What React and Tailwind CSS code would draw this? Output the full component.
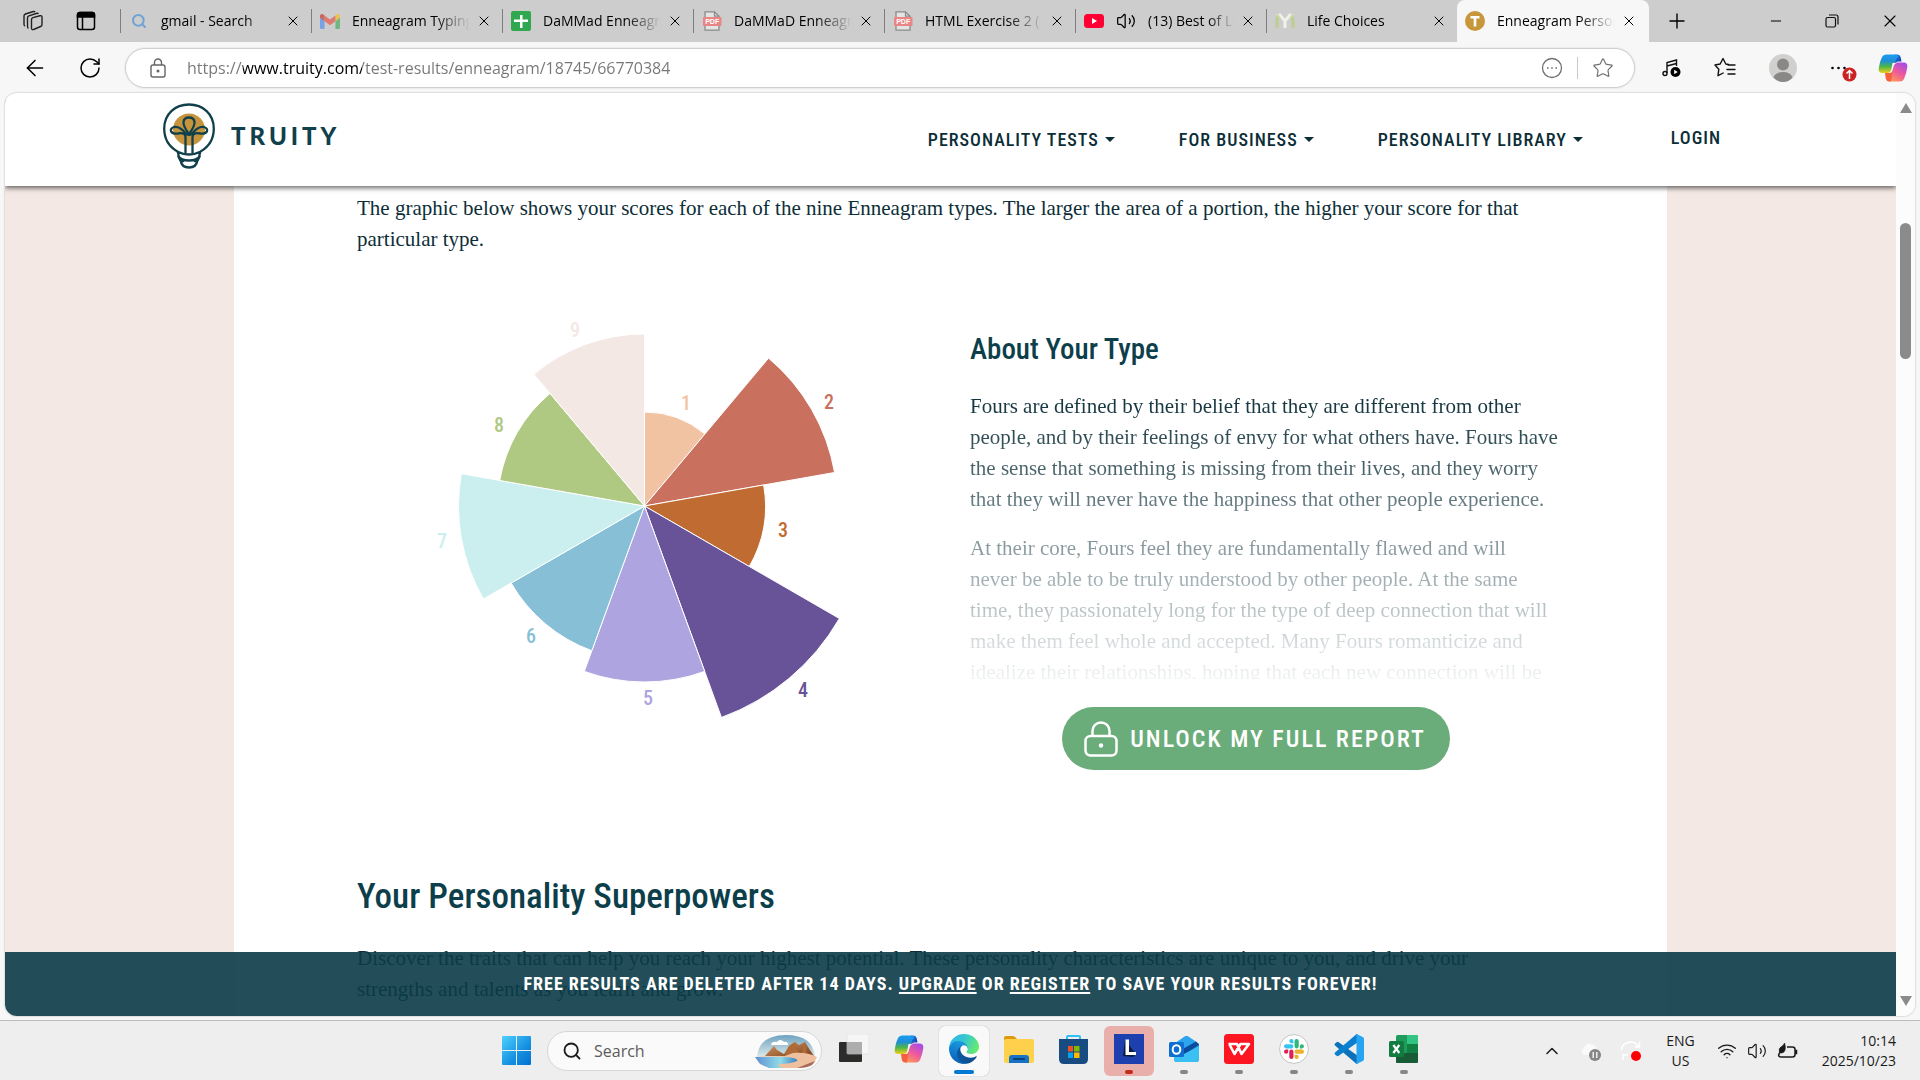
import React from "react";
import {
  ArrowLeft,
  RotateCw,
  Plus,
  Minus,
  X,
  Search,
  Star,
  Wifi,
  Volume2,
  ChevronUp,
} from "lucide-react";

const condensed =
  "font-['Liberation_Sans_Narrow','Roboto_Condensed','Liberation_Sans',sans-serif]";
const serif = "font-['Liberation_Serif',serif]";
const ui = "font-['Open_Sans','Noto_Sans',sans-serif]";

/* ---------- favicons ---------- */

function SearchFav() {
  return <Search className="size-4 text-[#6fa3d4]" strokeWidth={3} />;
}

function GmailFav() {
  return (
    <svg viewBox="0 0 24 18" className="w-5 opacity-60" aria-hidden="true">
      <path d="M0 3v13.4A1.6 1.6 0 0 0 1.6 18H5.5V8.500L0 4z" fill="#4285f4" />
      <path d="M24 3v13.400A1.600 1.600 0 0 1 22.400 18H18.500V8.500L24 4z" fill="#34a853" />
      <path d="M18.500 1.800V8.600L24 4.400V2.400C24 .3 21.700-.8 20 .5z" fill="#fbbc04" />
      <path d="M5.500 8.600V1.800L12 6.700l6.500-4.900v6.800L12 13.500z" fill="#ea4335" />
      <path d="M0 2.400v2l5.500 4.200V1.800L4 .5C2.300-.8 0 .3 0 2.400z" fill="#c5221f" />
    </svg>
  );
}

function SheetFav() {
  return (
    <svg viewBox="0 0 20 20" className="size-5" aria-hidden="true">
      <rect width="20" height="20" rx="2" fill="#2fa84f" />
      <path d="M9 4h2.500v4.500H17V11h-5.500v6H9v-6H3V8.500h6z" fill="#fff" />
    </svg>
  );
}

function PdfFav() {
  return (
    <svg viewBox="0 0 20 20" className="size-5" aria-hidden="true">
      <path d="M3 .8h9.500L17 5.200V19.200H3z" fill="#e4e4e4" stroke="#8a8a8a" strokeWidth="1.300" />
      <path d="M12.500.8v4.400H17" fill="none" stroke="#8a8a8a" strokeWidth="1.300" />
      <rect x="1" y="6" width="18.500" height="9" rx="1" fill="#e98585" />
      <text x="10.200" y="13" textAnchor="middle" fontSize="7" fontWeight="700" fontFamily="Liberation Sans" fill="#fff">
        PDF
      </text>
    </svg>
  );
}

function YoutubeFav() {
  return (
    <svg viewBox="0 0 20 20" className="size-5" aria-hidden="true">
      <rect y="3" width="20" height="14" rx="3.500" fill="#ff0033" />
      <path d="M8 7v6l5-3z" fill="#fff" />
    </svg>
  );
}

function LifeFav() {
  return (
    <svg viewBox="0 0 20 20" className="size-5" aria-hidden="true">
      <path d="M2 17V9q0-3 3-3M18 17V9q0-3-3-3" fill="none" stroke="#bccf8e" strokeWidth="3" />
      <path d="M4 3l6 7 6-7M10 10v7" fill="none" stroke="#f1f1ea" strokeWidth="3" />
      <path d="M2 3l3 4M18 3l-3 4" fill="none" stroke="#d3dcae" strokeWidth="2" />
    </svg>
  );
}

function TruityFav() {
  return (
    <svg viewBox="0 0 20 20" className="size-5" aria-hidden="true">
      <circle cx="10" cy="10" r="10" fill="#c9973b" />
      <path d="M5.500 5h9v2.500h-3.200V15.500H8.700V7.500H5.500z" fill="#fff" />
    </svg>
  );
}

/* ---------- browser chrome ---------- */

const tabs = [
  { title: "gmail - Search", icon: SearchFav },
  { title: "Enneagram Typing", icon: GmailFav },
  { title: "DaMMad Enneagram", icon: SheetFav },
  { title: "DaMMaD Enneagram", icon: PdfFav },
  { title: "HTML Exercise 2 (1)", icon: PdfFav },
  { title: "(13) Best of Lo", icon: YoutubeFav, sound: true },
  { title: "Life Choices", icon: LifeFav },
  { title: "Enneagram Person", icon: TruityFav, active: true },
];

function Tab({ title, icon: Icon, sound, active }) {
  return (
    <div
      className={
        active
          ? "flex h-full w-48 items-center rounded-t-lg bg-[#f7f7f7] pr-3 pl-2"
          : "flex h-full w-[191px] items-center pr-[10px]"
      }
    >
      {!active && <span className="mr-2 h-6 w-px shrink-0 bg-[#7d7d7d]" />}
      <button className="flex min-w-0 flex-1 items-center text-left">
        <span className="flex w-5 shrink-0 justify-center">
          <Icon />
        </span>
        {sound && <Volume2 className="ml-3 size-5 shrink-0" strokeWidth={1.5} />}
        <span className="ml-3 flex-1 overflow-hidden text-sm whitespace-nowrap text-black [mask-image:linear-gradient(90deg,#000_70%,transparent)]">
          {title}
        </span>
      </button>
      <button aria-label={"Close " + title} className="ml-1.5 shrink-0">
        <X className="size-4" strokeWidth={1.5} />
      </button>
    </div>
  );
}

function WorkspacesIcon() {
  return (
    <svg viewBox="0 0 22 22" className="size-[22px]" fill="none" stroke="#222" strokeWidth="1.400" aria-hidden="true">
      <path d="M9.500 9.500q0-1.500 1.400-1.900l7-1.900q2-.4 2.100 1.400v7.400q0 1.500-1.400 2l-7 3q-2 .6-2.100-1.200z" />
      <path d="M6.500 18.300q-1-.4-1-1.800V7.800q0-1.500 1.400-2l8-2.500q1-.2 1.600.5" />
      <path d="M3 16q-1-.5-1-1.800V6q0-1.500 1.400-2l8-2.500q1.100-.2 1.700.5" />
    </svg>
  );
}

function TabActionsIcon() {
  return (
    <svg viewBox="0 0 20 20" className="size-5" fill="none" stroke="#000" strokeWidth="1.500" aria-hidden="true">
      <rect x="1.500" y="1.500" width="17" height="17" rx="2.500" />
      <path d="M1.500 4a2.500 2.500 0 0 1 2.500-2.500h12A2.500 2.500 0 0 1 18.500 4v2h-17z" fill="#000" />
      <path d="M6.500 6v12" />
    </svg>
  );
}

function TabStrip() {
  return (
    <header className="flex h-[42px] shrink-0 items-center bg-[#cdcdcd]">
      <div className="flex w-[120px] items-center gap-8 pl-[22px]">
        <button aria-label="Workspaces"><WorkspacesIcon /></button>
        <button aria-label="Tab actions"><TabActionsIcon /></button>
      </div>
      {tabs.map((t) => (
        <Tab key={t.title} {...t} />
      ))}
      <button aria-label="New tab" className="ml-4"><Plus className="size-6" strokeWidth={1.400} /></button>
      <div className="ml-auto flex items-center gap-[41px] pr-5">
        <button aria-label="Minimize"><Minus className="size-4" strokeWidth={1.500} /></button>
        <button aria-label="Restore">
          <svg viewBox="0 0 14 14" className="size-3.5" fill="none" stroke="#111" strokeWidth="1.200" aria-hidden="true">
            <rect x="1" y="3.500" width="9.500" height="9.500" rx="1.500" />
            <path d="M4 1h7q2 0 2 2v7.500" />
          </svg>
        </button>
        <button aria-label="Close"><X className="size-5" strokeWidth={1.300} /></button>
      </div>
    </header>
  );
}

function LockIcon() {
  return (
    <svg viewBox="0 0 18 20" className="h-5 w-[18px]" fill="none" stroke="#666" strokeWidth="1.400" aria-hidden="true">
      <rect x="2" y="7" width="14" height="12" rx="2" />
      <path d="M5.500 7V4.500a3.500 3.500 0 0 1 7 0V7" />
      <circle cx="9" cy="13" r=".8" fill="#666" />
    </svg>
  );
}

function CopilotIcon({ size }) {
  return (
    <svg viewBox="0 0 30 28" className={size} aria-hidden="true">
      <defs>
        <linearGradient id="cpA" x1="0" y1="0" x2="0" y2="1">
          <stop offset="0" stopColor="#1b9cf2" />
          <stop offset=".35" stopColor="#1f8fd6" />
          <stop offset=".65" stopColor="#4cb648" />
          <stop offset="1" stopColor="#f0cf1c" />
        </linearGradient>
        <linearGradient id="cpB" x1=".8" y1="0" x2=".2" y2="1">
          <stop offset="0" stopColor="#a64be8" />
          <stop offset=".5" stopColor="#ee5a9c" />
          <stop offset="1" stopColor="#ff9a52" />
        </linearGradient>
        <linearGradient id="cpC" x1="0" y1="0" x2="1" y2="1">
          <stop offset="0" stopColor="#1587e0" />
          <stop offset="1" stopColor="#1a2fae" />
        </linearGradient>
      </defs>
      <path d="M17 .5h2.500q2.500 0 3.200 2.700L23.500 7.500H20q-2.500 0-3.300 2.500z" fill="url(#cpC)" />
      <path d="M8 .5h9.500q2.500 0 3 2.500-1.800.5-2.600 3L15 16q-.8 3-3.800 3H4.500Q.2 19 .7 14.500 1.500 8 4 3 5.300.5 8 .5z" fill="url(#cpA)" />
      <path d="M22 27.500h-9.500q-2.500 0-3-2.500 1.800-.5 2.600-3L15 12q.8-3.500 4-3.500h6.500q4.300 0 3.800 4.500-.8 6.500-3.300 12-1.300 2.500-4 2.500z" fill="url(#cpB)" />
      <path d="M13 27.500h-2q-2.500 0-3.200-2.700L7 19h4.200q2.500 0 3.400-2z" fill="#f5603f" />
      <path d="M14.500 9h4q-2 .5-2.700 3l-1.500 5q-.6 2-2.800 2H10q2.500-.5 3.200-3z" fill="#f7f7f7" />
    </svg>
  );
}

function Toolbar() {
  return (
    <div className="flex h-[51px] shrink-0 items-center bg-[#f7f7f7]">
      <button aria-label="Back" className="ml-[22px]"><ArrowLeft className="size-[26px]" strokeWidth={1.400} /></button>
      <button aria-label="Refresh" className="ml-[30px]"><RotateCw className="size-6" strokeWidth={1.500} /></button>
      <div className="ml-[23px] flex h-10 flex-1 items-center rounded-full border border-[#cfcfcf] bg-white px-5 shadow-[0_0_0_1px_#ececec]">
        <button aria-label="Site information" className="ml-[3px]"><LockIcon /></button>
        <input
          aria-label="Address"
          defaultValue="https://www.truity.com/test-results/enneagram/18745/66770384"
          className="ml-5 flex-1 bg-[linear-gradient(90deg,#767676_0_56px,#000_56px_175px,#767676_175px)] bg-clip-text text-base text-transparent outline-none"
        />
        <button aria-label="More options" className="text-[#707070]">
          <svg viewBox="0 0 22 22" className="size-[22px]" fill="none" stroke="currentColor" strokeWidth="1.300" aria-hidden="true">
            <circle cx="11" cy="11" r="9.500" />
            <path d="M6 11h1.600M10.200 11h1.600M14.400 11H16" strokeWidth="1.700" />
          </svg>
        </button>
        <span className="mx-[14px] h-[22px] w-px bg-[#c9c9c9]" />
        <button aria-label="Add to favourites" className="text-[#707070]"><Star className="size-[22px]" strokeWidth={1.300} /></button>
      </div>
      <div className="flex items-center gap-8 pr-3 pl-[26px]">
        <button aria-label="Media">
          <svg viewBox="0 0 20 20" className="size-5" fill="none" stroke="#111" strokeWidth="1.400" aria-hidden="true">
            <path d="M6 15V4.500L15.500 2v6M6 8l9.500-2.500" />
            <circle cx="4" cy="15.500" r="2" />
            <circle cx="14.500" cy="14" r="5" fill="#000" stroke="none" />
            <path d="M13.200 11.700v4.600l3.500-2.300z" fill="#fff" stroke="none" />
          </svg>
        </button>
        <button aria-label="Favourites">
          <svg viewBox="0 0 24 22" className="h-[22px] w-6" fill="none" stroke="#111" strokeWidth="1.400" strokeLinejoin="round" strokeLinecap="round" aria-hidden="true">
            <path d="M15.500 7.500 12.800 7 10 1.500 7.200 7 2 8l3.800 4.200-.8 6.500 5.200-2.700M15 8h7M14 12.500h8M15 17h7" />
          </svg>
        </button>
        <button aria-label="Profile">
          <svg viewBox="0 0 28 28" className="size-7" aria-hidden="true">
            <circle cx="14" cy="14" r="14" fill="#d2d0ce" />
            <circle cx="14" cy="10.500" r="6" fill="#8a8886" />
            <path d="M4.500 23.500q2-5.500 9.500-5.500t9.500 5.500q-4 4.500-9.500 4.500t-9.500-4.500z" fill="#8a8886" />
          </svg>
        </button>
        <button aria-label="Settings and more, update available">
          <svg viewBox="0 0 28 28" className="size-7" aria-hidden="true">
            <circle cx="3.500" cy="14" r="1.300" />
            <circle cx="9.500" cy="14" r="1.300" />
            <circle cx="15.500" cy="14" r="1.300" />
            <circle cx="20.500" cy="20.500" r="7" fill="#cc2222" />
            <path d="M20.500 25v-8M17.500 19.500l3-3 3 3" stroke="#fff" strokeWidth="1.500" fill="none" />
          </svg>
        </button>
        <button aria-label="Copilot" className="-ml-[11px]"><CopilotIcon size="h-7 w-[30px]" /></button>
      </div>
    </div>
  );
}

/* ---------- web page ---------- */

function Bulb() {
  return (
    <svg viewBox="0 0 52 66" className="h-[66px] w-[52px]" fill="none" stroke="#0f404b" strokeWidth="2.300" aria-hidden="true">
      <circle cx="26" cy="26.500" r="16" fill="#c6943c" stroke="none" />
      <path d="M14.500 48.500Q1.200 41 1.200 25.500C1.200 11 12 1.500 26 1.500S50.800 11 50.800 25.500Q50.800 41 37.500 48.500" />
      <path d="M14 48.500q12 6 24 0M15 49q1 11 6 9M37 49q-1 11-6 9" />
      <path d="M15 53q3 4.500 11 4.500t11-4.500" />
      <path d="M17.500 57q1 7.500 8.500 7.500t8.500-7.500" />
      <path d="M22.500 50V34q0-5-8-3.500c-7 1-9-5-3.500-6.500 5-1 9 3 11.500 6 2 2.500 5 2.500 7 0 2.500-3 6.500-7 11.500-6 5.500 1.500 3.500 7.500-3.500 6.500q-8-1.500-8 3.500v16" />
      <path d="M26 31q-6-8-5.500-12 .5-4.500 5.500-4.500t5.500 4.500q.5 4-5.500 12z" />
    </svg>
  );
}

function NavItem({ children }) {
  return (
    <button className="flex items-center gap-1.5 text-lg font-medium tracking-[1px]">
      {children}
      <span className="h-0 w-0 border-x-[5px] border-t-[5px] border-x-transparent border-t-[#0c2e38]" />
    </button>
  );
}

function SiteHeader() {
  return (
    <header className="relative z-10 flex h-[93px] shrink-0 items-center bg-white pr-[175px] pl-[158px] text-[#0c2e38] shadow-[0_2px_5px_rgba(0,0,0,0.6)]">
      <a href="#home" className="mb-2 flex items-center gap-4 text-[#0f404b]">
        <Bulb />
        <span className="font-[Lato] text-2xl font-black tracking-[4px]">TRUITY</span>
      </a>
      <nav className={condensed + " ml-auto flex items-center gap-16"}>
        <NavItem>PERSONALITY TESTS</NavItem>
        <NavItem>FOR BUSINESS</NavItem>
        <NavItem>PERSONALITY LIBRARY</NavItem>
        <a href="#login" className="mb-1 ml-6 text-lg font-medium tracking-[1px]">LOGIN</a>
      </nav>
    </header>
  );
}

const slices = [
  { n: 1, r: 94, color: "#f2c3a3", lx: 266, ly: 103 },
  { n: 2, r: 193, color: "#ca705e", lx: 409, ly: 102 },
  { n: 3, r: 121, color: "#bf6b32", lx: 363, ly: 230 },
  { n: 4, r: 225, color: "#685298", lx: 383, ly: 390 },
  { n: 5, r: 176, color: "#aea4df", lx: 228, ly: 398 },
  { n: 6, r: 154, color: "#87c0d6", lx: 111, ly: 336 },
  { n: 7, r: 186, color: "#cbefee", lx: 22, ly: 241 },
  { n: 8, r: 147, color: "#afc983", lx: 79, ly: 125 },
  { n: 9, r: 172, color: "#f3e8e3", lx: 155, ly: 30 },
];

function ScoreChart() {
  const cx = 224.5;
  const cy = 206;
  const pt = (r, deg) => {
    const a = ((deg - 90) * Math.PI) / 180;
    return `${(cx + r * Math.cos(a)).toFixed(2)} ${(cy + r * Math.sin(a)).toFixed(2)}`;
  };
  return (
    <svg viewBox="0 0 440 440" className="size-[440px]" role="img" aria-label="Enneagram scores by type">
      {slices.map((s, i) => (
        <path
          key={s.n}
          d={`M${cx} ${cy}L${pt(s.r, i * 40)}A${s.r} ${s.r} 0 0 1 ${pt(s.r, i * 40 + 40)}Z`}
          fill={s.color}
          stroke="#fff"
          strokeWidth="1"
        />
      ))}
      {slices.map((s) => (
        <text
          key={s.n}
          x={s.lx}
          y={s.ly + 7}
          textAnchor="middle"
          fill={s.color}
          className={condensed + " text-xl font-medium"}
        >
          {s.n}
        </text>
      ))}
    </svg>
  );
}

function About() {
  return (
    <section>
      <h3 className={condensed + " text-[29px] leading-9 font-medium text-[#0d3f4b]"}>About Your Type</h3>
      <div className="mt-6 -mr-8 h-[288px] overflow-hidden whitespace-nowrap [mask-image:linear-gradient(#000,rgba(0,0,0,0.06))]">
        <p className="leading-[31px]">
          Fours are defined by their belief that they are different from other
          <br />people, and by their feelings of envy for what others have. Fours have
          <br />the sense that something is missing from their lives, and they worry
          <br />that they will never have the happiness that other people experience.
        </p>
        <p className="mt-[18px] leading-[31px]">
          At their core, Fours feel they are fundamentally flawed and will
          <br />never be able to be truly understood by other people. At the same
          <br />time, they passionately long for the type of deep connection that will
          <br />make them feel whole and accepted. Many Fours romanticize and
          <br />idealize their relationships, hoping that each new connection will be
        </p>
      </div>
      <div className="mt-7 flex justify-center">
        <button className={condensed + " flex h-[63px] items-center gap-3 rounded-full bg-[#6aac7a] pr-6 pl-[22px] text-2xl font-medium tracking-[2px] text-white"}>
          <svg viewBox="0 0 34 36" className="h-9 w-[34px]" fill="none" stroke="#fff" strokeWidth="2.500" aria-hidden="true">
            <rect x="1.500" y="15" width="31" height="19.500" rx="5" />
            <path d="M8.500 15V10a8.500 8.500 0 0 1 17 0v5" />
            <circle cx="17" cy="24.500" r="2.200" fill="#fff" stroke="none" />
          </svg>
          UNLOCK MY FULL REPORT
        </button>
      </div>
    </section>
  );
}

function ScrollBar() {
  return (
    <div className="flex w-[19px] shrink-0 flex-col items-center justify-between bg-[#fcfcfc] py-[10px]" aria-hidden="true">
      <span className="h-0 w-0 border-x-[6px] border-b-[10px] border-x-transparent border-b-[#8b8b8b]" />
      <span className="mt-[110px] mb-auto h-[136px] w-[11px] rounded-full bg-[#8b8b8b]" />
      <span className="h-0 w-0 border-x-[6px] border-t-[10px] border-x-transparent border-t-[#8b8b8b]" />
    </div>
  );
}

function Page() {
  return (
    <div className="flex min-h-0 flex-1 bg-[#f7f7f7] px-[5px] pb-1">
      <div className="flex min-w-0 flex-1 overflow-hidden rounded-xl bg-white shadow-[0_0_2px_rgba(0,0,0,0.35)]">
        <div className="relative flex min-w-0 flex-1 flex-col overflow-hidden bg-[#f3e8e3]">
          <SiteHeader />
          <main className={serif + " mr-[229px] ml-[229px] min-h-0 flex-1 bg-white pt-[7px] pr-[120px] pl-[123px] text-[21px] text-[#0c2e38]"}>
            <p className="leading-[31px]">
              The graphic below shows your scores for each of the nine Enneagram types. The larger the area of a portion, the higher your score for that
              <br />particular type.
            </p>
            <div className="mt-[45px] grid grid-cols-[613px_572px]">
              <div className="pl-[63px]"><ScoreChart /></div>
              <div className="pt-[31px]"><About /></div>
            </div>
            <h2 className={condensed + " mt-[103px] text-[35px] leading-12 font-medium text-[#0d3f4b]"}>Your Personality Superpowers</h2>
            <p className="mt-[22px] leading-[31px]">
              Discover the traits that can help you reach your highest potential. These personality characteristics are unique to you, and drive your
              <br />strengths and talents as you learn and grow.
            </p>
          </main>
          <aside className={condensed + " absolute inset-x-0 bottom-0 z-10 flex h-16 items-center justify-center bg-[#0b3b47]/90 text-lg font-bold tracking-[1px] text-white"}>
            <p>
              FREE RESULTS ARE DELETED AFTER 14 DAYS.{" "}
              <a href="#upgrade" className="underline decoration-2 underline-offset-2">UPGRADE</a> OR{" "}
              <a href="#register" className="underline decoration-2 underline-offset-2">REGISTER</a> TO SAVE YOUR RESULTS FOREVER!
            </p>
          </aside>
        </div>
        <ScrollBar />
      </div>
    </div>
  );
}

/* ---------- taskbar ---------- */

function WindowsIcon() {
  return (
    <svg viewBox="0 0 29 29" className="size-[29px]" aria-hidden="true">
      <defs>
        <linearGradient id="win" x1="0" y1="0" x2="1" y2="1">
          <stop offset="0" stopColor="#4fd0ff" />
          <stop offset=".6" stopColor="#1590e0" />
          <stop offset="1" stopColor="#0070d0" />
        </linearGradient>
      </defs>
      <path d="M1 0h13v14H0V1q0-1 1-1zM15 0h13q1 0 1 1v13H15zM0 15h14v14H1q-1 0-1-1zM15 15h14v13q0 1-1 1H15z" fill="url(#win)" />
    </svg>
  );
}

function Landscape() {
  return (
    <svg viewBox="0 0 62 34" className="h-[34px] w-[62px]" aria-hidden="true">
      <defs>
        <linearGradient id="sky" x1="0" y1="0" x2="0" y2="1">
          <stop offset="0" stopColor="#6fa3c0" />
          <stop offset="1" stopColor="#dceaea" />
        </linearGradient>
        <linearGradient id="lake" x1="0" y1="0" x2="1" y2="0">
          <stop offset="0" stopColor="#5f8fd0" />
          <stop offset=".6" stopColor="#8fdce8" />
          <stop offset="1" stopColor="#3f7fc0" />
        </linearGradient>
        <linearGradient id="rock" x1="0" y1="0" x2="1" y2="1">
          <stop offset="0" stopColor="#d99a63" />
          <stop offset="1" stopColor="#7a3f1c" />
        </linearGradient>
      </defs>
      <path d="M2 23Q4 1 31 1t29 22z" fill="url(#sky)" />
      <path d="M16 11q1-4 6-3 3-4 7 0 4-1 4 3z" fill="#fff" />
      <path d="M10 22l9-10 3 4 7 4 5-8 6-4 4 3 6-3 5 8 4 6z" fill="url(#rock)" />
      <path d="M34 12l6-4 2 8 5 6H30zM50 8l2 14h-6l2-8z" fill="#b06a38" />
      <path d="M0 23q16-1 30-1l8-3q14-1 24 4l-3 6q-4 4-12 5H20L6 30z" fill="#efc0a0" />
      <path d="M0 23h30q14 1 12 4-6 3-18 3-2 2 4 4H14L5 30z" fill="url(#lake)" />
      <path d="M42 34q10-4 18-7l-3 4q-5 3-15 3z" fill="#a86a58" />
    </svg>
  );
}

function TaskViewIcon() {
  return (
    <svg viewBox="0 0 30 30" className="size-[30px]" aria-hidden="true">
      <rect x="0" y="8" width="23" height="20" rx="1" fill="#2c2c2a" />
      <rect x="8" y="0" width="22" height="20" rx="1" fill="#f6f6f6" stroke="#dcdcdc" strokeWidth=".6" />
      <rect x="8" y="8" width="15" height="12" fill="#adadad" />
    </svg>
  );
}

function EdgeIcon() {
  return (
    <svg viewBox="0 0 256 256" className="size-[30px]" aria-hidden="true">
      <defs>
        <linearGradient id="eA" x1="0" y1=".7" x2="1" y2=".7">
          <stop offset="0" stopColor="#0c59a4" />
          <stop offset="1" stopColor="#114a8b" />
        </linearGradient>
        <linearGradient id="eB" x1=".6" y1="0" x2=".3" y2="1">
          <stop offset="0" stopColor="#1b9de2" />
          <stop offset=".6" stopColor="#0f78cc" />
          <stop offset="1" stopColor="#0a5cb0" />
        </linearGradient>
        <linearGradient id="eC" x1="0" y1=".2" x2="1" y2=".5">
          <stop offset="0" stopColor="#2bb4ea" />
          <stop offset=".5" stopColor="#36c8cf" />
          <stop offset="1" stopColor="#66eb6e" />
        </linearGradient>
      </defs>
      <g transform="translate(-4.630 -4.920)">
        <path d="M235.680 195.460a93.730 93.730 0 01-10.540 4.710 101.870 101.870 0 01-35.900 6.460c-47.320 0-88.540-32.550-88.540-74.320A31.480 31.480 0 01117.130 105c-42.800 1.800-53.800 46.400-53.800 72.530 0 73.880 68.090 81.370 82.760 81.370 7.910 0 19.840-2.300 27-4.560l1.310-.44a128.340 128.340 0 0066.600-52.800 4 4 0 00-5.320-5.640z" fill="url(#eA)" />
        <path d="M110.340 246.340A79.200 79.200 0 0187.600 225a80.720 80.720 0 0129.530-120c3.120-1.470 8.450-4.130 15.540-4a32.350 32.350 0 0125.690 13 31.880 31.880 0 016.360 18.660c0-.21 24.460-79.600-80-79.600-43.900 0-80 41.660-80 78.210a130.150 130.150 0 0012.110 56 128 128 0 00156.380 67.110 75.550 75.550 0 01-62.780-8z" fill="url(#eB)" />
        <path d="M156.940 153.780c-.81 1.050-3.300 2.500-3.300 5.660 0 2.610 1.700 5.120 4.720 7.230 14.380 10 41.490 8.680 41.560 8.680a59.560 59.560 0 0030.270-8.350 61.380 61.380 0 0030.430-52.880c.26-22.410-8-37.310-11.340-43.910C228.090 28.760 182.350 5 132.610 5A128 128 0 004.630 131.200c.48-36.540 36.800-66.050 80-66.050 3.500 0 23.460.34 42 10.070 16.340 8.580 24.900 18.940 30.850 29.210 6.180 10.670 7.280 24.150 7.280 29.520s-2.740 13.330-7.820 19.830z" fill="url(#eC)" />
      </g>
    </svg>
  );
}

function FolderIcon() {
  return (
    <svg viewBox="0 0 30 27" className="h-[27px] w-[30px]" aria-hidden="true">
      <path d="M0 2q0-2 2-2h7q1 0 2 1l2 2v6H0z" fill="#dc9a0c" />
      <rect y="3" width="30" height="24" rx="2" fill="#ffd04c" />
      <path d="M5 22q0-3 3-3h14q3 0 3 3v5H5z" fill="#1672c4" />
      <rect x="9" y="22" width="12" height="2" rx="1" fill="#0b3f79" />
    </svg>
  );
}

function StoreIcon() {
  return (
    <svg viewBox="0 0 29 29" className="size-[29px]" aria-hidden="true">
      <path d="M8 5V2q0-1 1-1h11q1 0 1 1v3" fill="none" stroke="#2fc0f5" strokeWidth="2" />
      <path d="M0 4h29v20q0 5-5 5H5q-5 0-5-5z" fill="#184b82" />
      <path d="M9 11h5v5.500H9z" fill="#f25022" />
      <path d="M15 11h5.500v5.500H15z" fill="#7fba00" />
      <path d="M9 17.500h5V23H9z" fill="#00a4ef" />
      <path d="M15 17.500h5.500V23H15z" fill="#ffb900" />
    </svg>
  );
}

function LIcon() {
  return (
    <svg viewBox="0 0 30 30" className="size-[30px]" aria-hidden="true">
      <rect width="30" height="30" fill="#1e3fae" />
      <path d="M11 6 9 22l10 1 3-3z" fill="#0c1c3c" />
      <path d="M11.500 5.500h3.500V18h7v3H11.500z" fill="#fff" />
    </svg>
  );
}

function OutlookIcon() {
  return (
    <svg viewBox="0 0 30 28" className="h-7 w-[30px]" aria-hidden="true">
      <path d="M5 9 16 1.500Q17.500.5 19 1.500L30 9v15q0 3-3 3H8q-3 0-3-3z" fill="#1688dc" />
      <path d="M5 9 16 1.500Q17.500.5 19 1.500L28 7.500 14 17 5 12z" fill="#2aa5ee" />
      <path d="M12 15 27 6.500l3 3L15 20z" fill="#0c4a9c" />
      <path d="M5 21 13 20 30 11v12q0 4-4 4H9q-4 0-4-3z" fill="#3bc0f4" />
      <rect y="7" width="15" height="15" rx="1.500" fill="#0f6fd0" />
      <ellipse cx="7.500" cy="14.500" rx="3.800" ry="4.200" fill="none" stroke="#fff" strokeWidth="2" />
    </svg>
  );
}

function WpsIcon() {
  return (
    <svg viewBox="0 0 30 30" className="size-[30px]" aria-hidden="true">
      <rect width="30" height="30" rx="3.500" fill="#fb1622" />
      <path d="M4.500 10H13L17.500 20 25 10H16.500L10.500 20 5.500 10.500" fill="none" stroke="#fff" strokeWidth="2.600" strokeLinejoin="round" />
    </svg>
  );
}

function SlackIcon() {
  return (
    <svg viewBox="0 0 36 36" className="size-[30px]" aria-hidden="true">
      <circle cx="18" cy="18" r="17.300" fill="#fff" stroke="#c4c4c4" strokeWidth="1.200" />
      <g transform="translate(6 6)">
        <path fill="#e01e5a" d="M5.042 15.165a2.528 2.528 0 0 1-2.520 2.523A2.528 2.528 0 0 1 0 15.165a2.527 2.527 0 0 1 2.522-2.520h2.520v2.520zM6.313 15.165a2.527 2.527 0 0 1 2.521-2.520 2.527 2.527 0 0 1 2.521 2.520v6.313A2.528 2.528 0 0 1 8.834 24a2.528 2.528 0 0 1-2.521-2.522v-6.313z" />
        <path fill="#36c5f0" d="M8.834 5.042a2.528 2.528 0 0 1-2.521-2.520A2.528 2.528 0 0 1 8.834 0a2.528 2.528 0 0 1 2.521 2.522v2.520H8.834zM8.834 6.313a2.528 2.528 0 0 1 2.521 2.521 2.528 2.528 0 0 1-2.521 2.521H2.522A2.528 2.528 0 0 1 0 8.834a2.528 2.528 0 0 1 2.522-2.521h6.312z" />
        <path fill="#2eb67d" d="M18.956 8.834a2.528 2.528 0 0 1 2.522-2.521A2.528 2.528 0 0 1 24 8.834a2.528 2.528 0 0 1-2.522 2.521h-2.522V8.834zM17.688 8.834a2.528 2.528 0 0 1-2.523 2.521 2.527 2.527 0 0 1-2.520-2.521V2.522A2.527 2.527 0 0 1 15.165 0a2.528 2.528 0 0 1 2.523 2.522v6.312z" />
        <path fill="#ecb22e" d="M15.165 18.956a2.528 2.528 0 0 1 2.523 2.522A2.528 2.528 0 0 1 15.165 24a2.527 2.527 0 0 1-2.520-2.522v-2.522h2.520zM15.165 17.688a2.527 2.527 0 0 1-2.520-2.523 2.526 2.526 0 0 1 2.520-2.520h6.313A2.527 2.527 0 0 1 24 15.165a2.528 2.528 0 0 1-2.522 2.523h-6.313z" />
      </g>
    </svg>
  );
}

function CodeIcon() {
  return (
    <svg viewBox="0 0 30 30" className="size-[30px]" aria-hidden="true">
      <path d="M1 9.500 3 8q.8-.5 1.700.2L24 22v7.500L21.500 29 1 11.500q-1-1 0-2z" fill="#0d71b9" />
      <path d="M1 20.500 3 22q.8.500 1.700-.2L24 8V.5L21.500 1 1 18.500q-1 1 0 2z" fill="#0a7fd0" />
      <path d="M21.500.3q.8-.5 1.700 0l5.500 2.700q1.300.6 1.300 2v20q0 1.400-1.300 2l-5.500 2.700q-.9.500-1.700 0l1-1.700V2z" fill="#27a5f2" />
    </svg>
  );
}

function ExcelIcon() {
  return (
    <svg viewBox="0 0 29 28" className="h-7 w-[29px]" aria-hidden="true">
      <rect x="7" width="22" height="28" rx="1.500" fill="#1f9b5b" />
      <path d="M18 0h9.500Q29 0 29 1.500V9H18z" fill="#33c481" />
      <path d="M18 9h11v9H18z" fill="#108043" />
      <path d="M7 18h22v8.500q0 1.500-1.500 1.500h-19Q7 28 7 26.500z" fill="#185c37" />
      <rect y="6" width="15" height="16" rx="1.500" fill="#107c41" />
      <path d="M4.300 10 10.300 18M10.300 10 4.300 18" stroke="#fff" strokeWidth="2.200" />
    </svg>
  );
}

const apps = [
  { name: "Task view", icon: <TaskViewIcon /> },
  { name: "Copilot", icon: <CopilotIcon size="h-7 w-[30px]" /> },
  { name: "Microsoft Edge", icon: <EdgeIcon />, tile: "bg-[#f9f9f9] shadow-[0_0_1px_#999]", mark: "w-5 bg-[#0078d4]" },
  { name: "File Explorer", icon: <FolderIcon /> },
  { name: "Microsoft Store", icon: <StoreIcon /> },
  { name: "L", icon: <LIcon />, tile: "bg-[#e9afab]", mark: "w-2 bg-[#c42b1c]" },
  { name: "Outlook", icon: <OutlookIcon />, mark: "w-2 bg-[#868686]" },
  { name: "WPS Office", icon: <WpsIcon />, mark: "w-2 bg-[#868686]" },
  { name: "Slack", icon: <SlackIcon />, mark: "w-2 bg-[#868686]" },
  { name: "Visual Studio Code", icon: <CodeIcon />, mark: "w-2 bg-[#868686]" },
  { name: "Excel", icon: <ExcelIcon />, mark: "w-2 bg-[#868686]" },
];

function Taskbar() {
  return (
    <footer className="grid h-[60px] shrink-0 grid-cols-[1fr_auto_1fr] items-center border-t border-[#bcbcbc] bg-[#eeeeee]">
      <div />
      <div className="flex items-center">
        <button aria-label="Start" className="flex w-[55px] justify-center"><WindowsIcon /></button>
        <label className="mr-1 ml-[3px] flex h-10 w-[275px] items-center rounded-full border border-[#d6d6d6] bg-[#fafafa] pr-1 pl-[14px]">
          <Search className="size-5 text-[#1c1c1c]" strokeWidth={2.200} />
          <input type="search" aria-label="Search" placeholder="Search" className="ml-3 min-w-0 flex-1 bg-transparent text-base placeholder-[#5c5c5c] outline-none" />
          <Landscape />
        </label>
        {apps.map((a) => (
          <button key={a.name} aria-label={a.name} className="flex w-[55px] justify-center">
            <span className={"flex h-[50px] w-[50px] flex-col items-center justify-between rounded-md pt-[3px] pb-px " + (a.tile || "")}>
              <span className="flex h-11 items-center">{a.icon}</span>
              <span className={"mb-px h-1 shrink-0 rounded-full " + (a.mark || "w-0")} />
            </span>
          </button>
        ))}
      </div>
      <div className="flex items-center justify-end pr-6 text-[#1b1b1b]">
        <button aria-label="Show hidden icons"><ChevronUp className="size-5" strokeWidth={1.800} /></button>
        <button aria-label="Cloud sync paused" className="ml-[18px]">
          <svg viewBox="0 0 22 20" className="h-5 w-[22px]" aria-hidden="true">
            <path d="M4 14a4 4 0 0 1 0-7q2-5 7-4t6 5v6z" fill="#fafafa" />
            <circle cx="15" cy="14" r="6" fill="#868686" />
            <path d="M13.200 11v6M16.800 11v6" stroke="#fff" strokeWidth="1.300" />
          </svg>
        </button>
        <button aria-label="Updates" className="ml-[18px]">
          <svg viewBox="0 0 22 22" className="size-[22px]" aria-hidden="true">
            <path d="M1.500 10a9 9 0 0 1 17-3M19.500 2v5h-5M3 20v-5h5" fill="none" stroke="#fff" strokeWidth="1.500" />
            <circle cx="16" cy="16" r="5" fill="#ff0000" />
          </svg>
        </button>
        <button className="ml-6 text-center text-sm leading-5">ENG<br />US</button>
        <button aria-label="Network, volume and battery" className="ml-[22px] flex items-center gap-2.5">
          <Wifi className="size-5" strokeWidth={1.600} />
          <Volume2 className="size-5" strokeWidth={1.400} />
          <svg viewBox="0 0 21 20" className="h-5 w-[21px]" fill="none" stroke="#1b1b1b" strokeWidth="1.500" aria-hidden="true">
            <path d="M10 6h5.500Q18 6 18 8.500v5q0 2.500-2.500 2.500H4q-2.500 0-2.500-2M18 9.500h1.500v3H18" />
            <path d="M7.500 2q2 6-.5 9-2.500 2-4.500 0-1.500-3.500 2-5.500Q7 4 7.500 2z" fill="#1b1b1b" strokeWidth=".6" />
            <path d="M5 8 1.500 14" />
          </svg>
        </button>
        <button className="ml-6 text-right text-sm leading-5">10:14<br />2025/10/23</button>
      </div>
    </footer>
  );
}

export default function App() {
  return (
    <div className={ui + " flex h-screen flex-col overflow-hidden bg-[#f7f7f7] text-black"}>
      <TabStrip />
      <Toolbar />
      <Page />
      <Taskbar />
    </div>
  );
}
